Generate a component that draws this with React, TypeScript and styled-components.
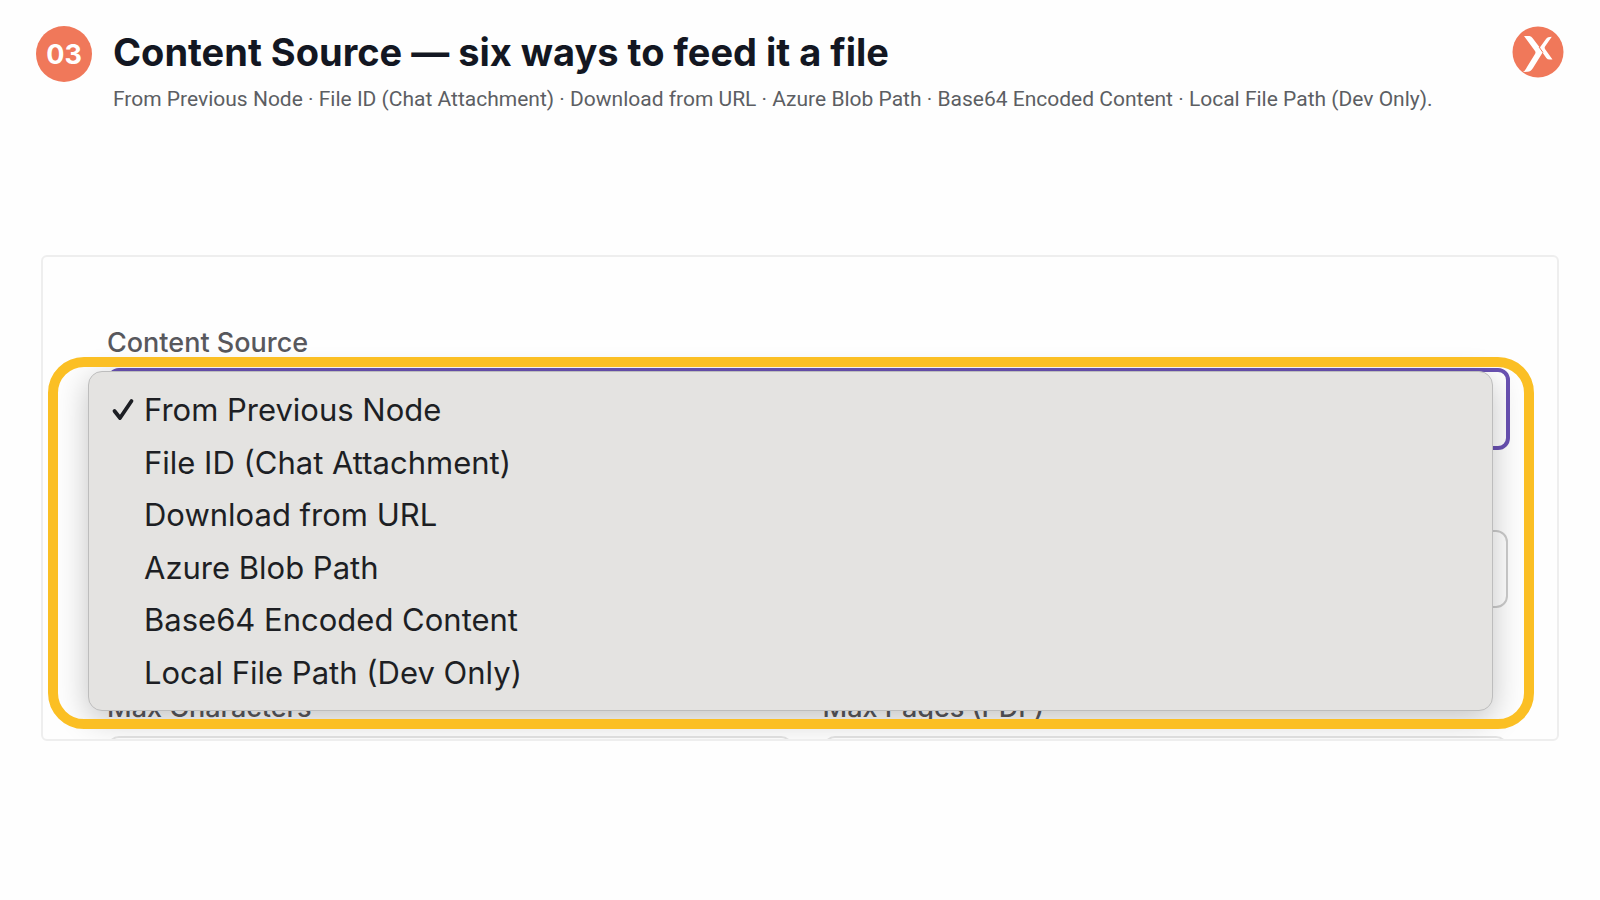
import React, { useState } from "react";
import styled, { createGlobalStyle } from "styled-components";

const GlobalStyle = createGlobalStyle`
  * { box-sizing: border-box; }
  body {
    margin: 0;
    background: #fefefe;
    font-family: Inter, "Liberation Sans", sans-serif;
  }
`;

const Header = styled.header`
  display: flex;
  align-items: flex-start;
  gap: 21px;
  padding: 26px 36px 0;
`;

const StepBadge = styled.span`
  display: flex;
  flex: none;
  align-items: center;
  justify-content: center;
  width: 56px;
  height: 56px;
  border-radius: 50%;
  background: #f0785a;
  color: #ffffff;
  font-size: 27px;
  font-weight: 700;
`;

const Heading = styled.div`
  flex: 1;
  padding-top: 4px;
`;

const Title = styled.h1`
  margin: 0;
  color: #131722;
  font-size: 38px;
  line-height: 44px;
  font-weight: 700;
`;

const Subtitle = styled.p`
  margin: 10px 0 0;
  color: #5c5e63;
  font-family: Roboto, "Liberation Sans", sans-serif;
  font-size: 21px;
  line-height: 30px;
`;

const Logo = styled.svg`
  flex: none;
  width: 52px;
  height: 52px;
`;

const Card = styled.main`
  position: relative;
  height: 486px;
  margin: 141px 41px 0;
  padding: 70px 47px 0 64px;
  overflow: hidden;
  border: 2px solid #eeeeee;
  border-radius: 6px;
  background: #fefefe;
`;

const Field = styled.div<{ $gap: number }>`
  display: flex;
  flex-direction: column;
  gap: ${(p) => p.$gap}px;
`;

const FieldLabel = styled.label`
  color: #58585d;
  font-size: 27px;
  line-height: 32px;
  font-weight: 500;
`;

const SourceSelect = styled.select`
  height: 82px;
  padding: 0 40px;
  appearance: none;
  border: 4px solid #6a52b3;
  border-radius: 12px;
  outline: none;
  background: #ffffff;
  color: transparent;
  font: inherit;
`;

const TextInput = styled.input<{ $faint?: boolean }>`
  width: 100%;
  height: 78px;
  border: 2px solid ${(p) => (p.$faint ? "#e4e4e4" : "#cccccc")};
  border-radius: 12px;
  background: #ffffff;
`;

const Spaced = styled.div`
  margin: 80px 2px 84px;
`;

const Limits = styled.div`
  display: grid;
  grid-template-columns: 1fr 1fr;
  gap: 30px;
  margin-right: 2px;
`;

const Menu = styled.ul`
  position: absolute;
  top: 114px;
  left: 45px;
  right: 64px;
  display: grid;
  grid-auto-rows: 1fr;
  height: 340px;
  margin: 0;
  padding: 12px 0 11px;
  border: 1px solid #bdbdbd;
  border-radius: 14px;
  background: #e4e3e1;
  box-shadow: 0 8px 32px rgba(0, 0, 0, 0.24);
  list-style: none;
`;

const Option = styled.button`
  display: flex;
  align-items: center;
  width: 100%;
  height: 100%;
  padding: 0 22px;
  border: 0;
  background: none;
  color: #1d1f24;
  font-family: inherit;
  font-size: 31px;
  line-height: 40px;
  text-align: left;
`;

const TickSlot = styled.span`
  display: flex;
  flex: none;
  width: 33px;
`;

const Highlight = styled.div`
  position: absolute;
  top: 100px;
  left: 5px;
  right: 23px;
  height: 372px;
  border: 10px solid #fbbf24;
  border-radius: 36px;
  pointer-events: none;
`;

const sources = [
  "From Previous Node",
  "File ID (Chat Attachment)",
  "Download from URL",
  "Azure Blob Path",
  "Base64 Encoded Content",
  "Local File Path (Dev Only)",
];

function Tick() {
  return (
    <svg width="24" height="24" viewBox="0 0 24 24" fill="none" aria-hidden="true">
      <path d="M3.500 13 L9 20 L20.500 3" stroke="#1d1f24" strokeWidth="3.800" strokeLinecap="round" strokeLinejoin="round" />
    </svg>
  );
}

export default function App() {
  const [source, setSource] = useState(sources[0]);

  return (
    <>
      <GlobalStyle />
      <Header>
        <StepBadge>03</StepBadge>
        <Heading>
          <Title>Content Source — six ways to feed it a file</Title>
          <Subtitle>
            From Previous Node · File ID (Chat Attachment) · Download from URL · Azure Blob Path · Base64 Encoded
            Content · Local File Path (Dev Only).
          </Subtitle>
        </Heading>
        <Logo viewBox="0 0 52 52" aria-hidden="true">
          <circle cx="26" cy="26" r="25.5" fill="#f0785a" />
          <path d="M12 10 H17.500 Q19.500 10.300 20.500 12 L30 24.500 Q31 26 30 27.500 L21 42 Q19 45.500 15.500 45.800 L11 46 Q13.500 44.500 15 41 L23 28 Q24 26.500 23 25 Z" fill="#ffffff" />
          <path d="M34 13 Q35.500 10.700 39.800 10.700 L33 20.500 Q32.200 21.700 33 23 L40.500 33.500 H37.500 Q35.500 33.500 34.300 32 L28.400 23.500 Q27.500 22 28.400 20.700 Z" fill="#ffffff" />
          <path d="M27 21 L31 26.500" stroke="#f0785a" strokeWidth="1" />
        </Logo>
      </Header>

      <Card>
        <Field $gap={9}>
          <FieldLabel htmlFor="source">Content Source</FieldLabel>
          <SourceSelect id="source" value={source} onChange={(e) => setSource(e.target.value)}>
            {sources.map((name) => (
              <option key={name}>{name}</option>
            ))}
          </SourceSelect>
        </Field>
        <Spaced>
          <TextInput aria-label="Source value" />
        </Spaced>
        <Limits>
          <Field $gap={12}>
            <FieldLabel htmlFor="max-characters">Max Characters</FieldLabel>
            <TextInput id="max-characters" $faint />
          </Field>
          <Field $gap={12}>
            <FieldLabel htmlFor="max-pages">Max Pages (PDF)</FieldLabel>
            <TextInput id="max-pages" $faint />
          </Field>
        </Limits>

        <Menu role="listbox" aria-label="Content Source">
          {sources.map((name) => (
            <li key={name} role="presentation">
              <Option type="button" role="option" aria-selected={name === source} onClick={() => setSource(name)}>
                <TickSlot>{name === source && <Tick />}</TickSlot>
                {name}
              </Option>
            </li>
          ))}
        </Menu>
        <Highlight />
      </Card>
    </>
  );
}
